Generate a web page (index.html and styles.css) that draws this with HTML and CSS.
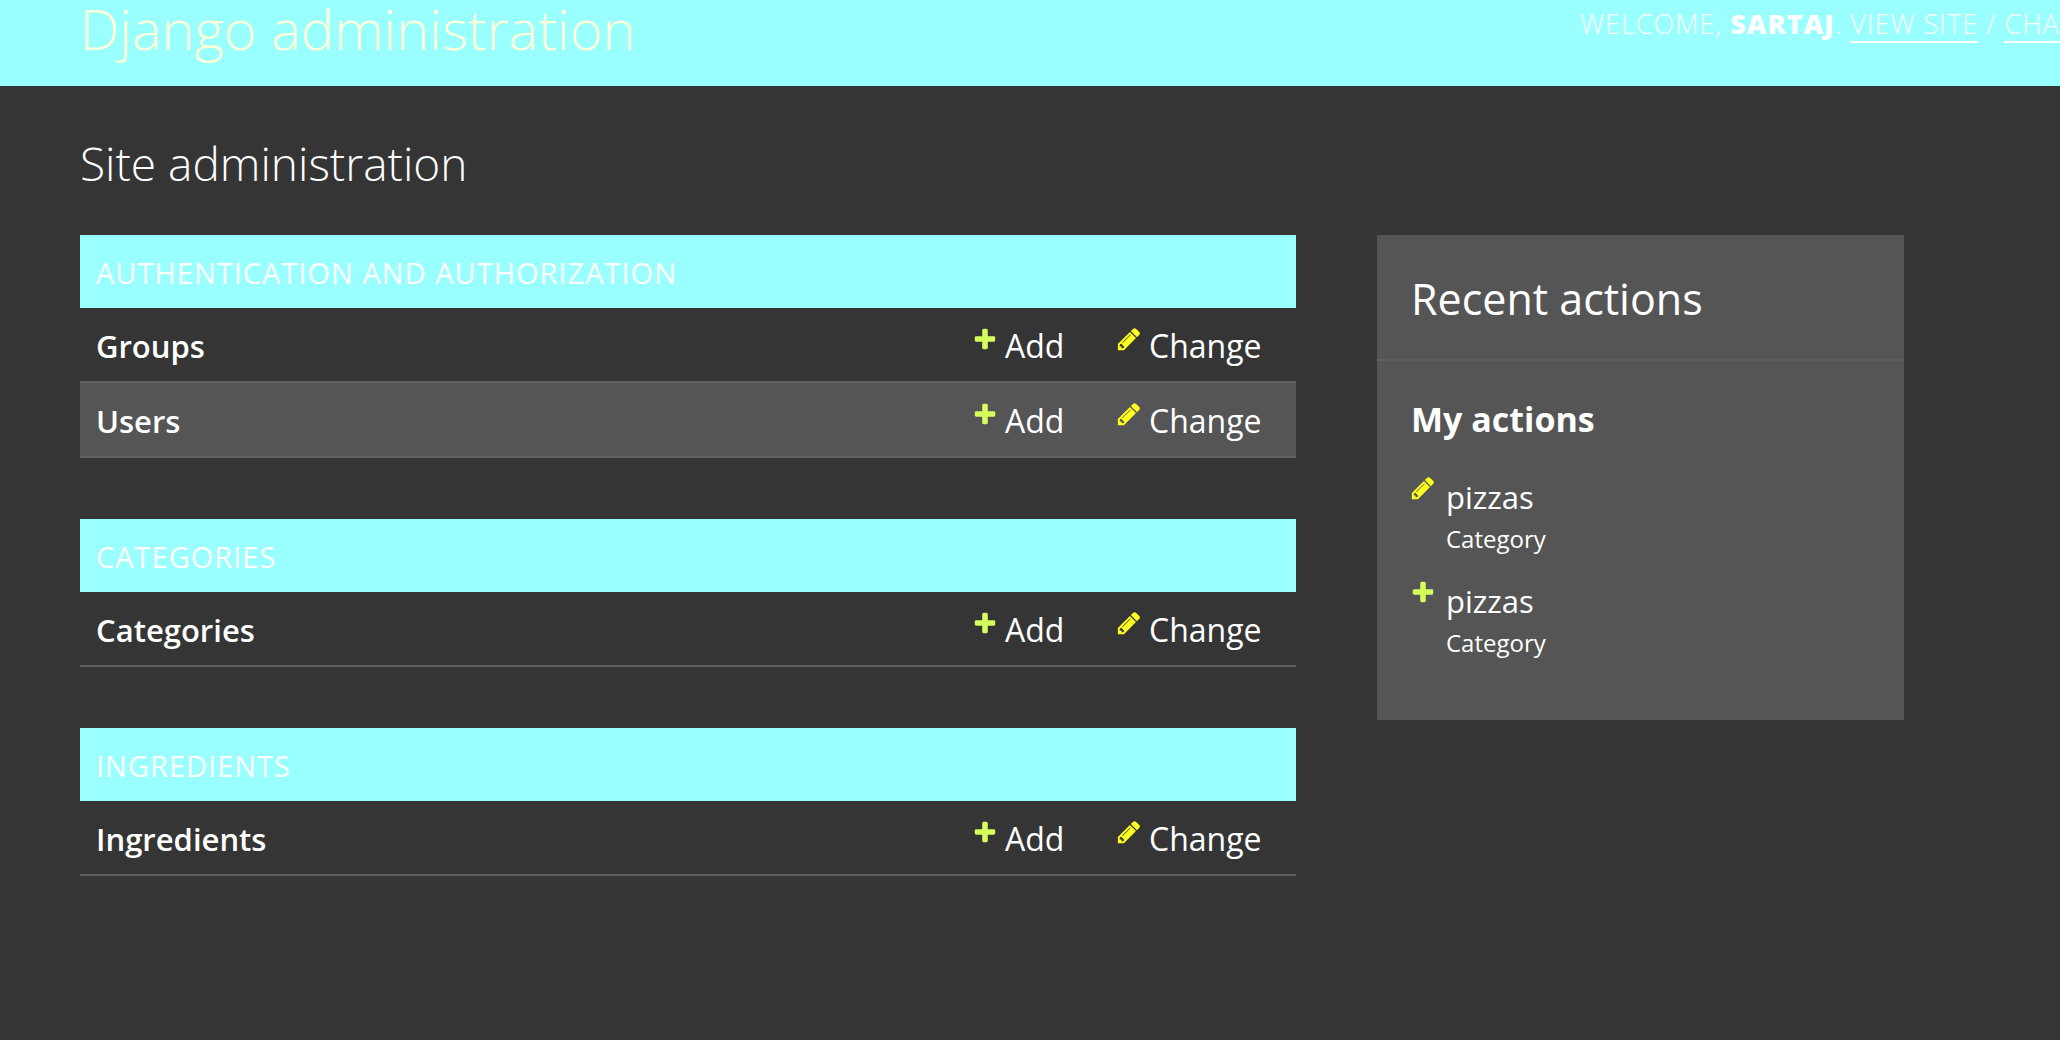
FILE: index.html
```html
<!DOCTYPE html>
<html lang="en">
<head>
<meta charset="utf-8">
<title>Site administration | Django site admin</title>
<link rel="stylesheet" href="styles.css">
</head>
<body>
<svg class="sprite" aria-hidden="true">
  <symbol id="icon-add" viewBox="0 0 1792 1792"><path d="M1600 796v192q0 40-28 68t-68 28h-416v416q0 40-28 68t-68 28h-192q-40 0-68-28t-28-68v-416h-416q-40 0-68-28t-28-68v-192q0-40 28-68t68-28h416v-416q0-40 28-68t68-28h192q40 0 68 28t28 68v416h416q40 0 68 28t28 68z"/></symbol>
  <symbol id="icon-change" viewBox="0 0 1792 1792"><path d="M491 1536l91-91-235-235-91 91v107h128v128h107zm523-928q0-22-22-22-10 0-17 7l-542 542q-7 7-7 17 0 22 22 22 10 0 17-7l542-542q7-7 7-17zm-54-192l416 416-832 832h-416v-416zm683 96q0 53-37 90l-166 166-416-416 166-165q36-38 90-38 53 0 91 38l235 234q37 39 37 91z"/></symbol>
</svg>
<header class="header">
  <h1 class="branding"><a href="#">Django administration</a></h1>
  <div class="user-tools">Welcome, <strong>Sartaj</strong>. <a href="#">View site</a> / <a href="#">Change password</a></div>
</header>
<main class="content">
  <h2 class="page-title">Site administration</h2>
  <div class="columns">
    <div class="modules">
      <table class="module">
        <caption><a href="#">Authentication and Authorization</a></caption>
        <tbody>
          <tr><th scope="row"><a href="#">Groups</a></th><td class="add-cell"><a class="action" href="#"><svg class="icon add"><use href="#icon-add"/></svg>Add</a></td><td class="change-cell"><a class="action" href="#"><svg class="icon change"><use href="#icon-change"/></svg>Change</a></td></tr>
          <tr><th scope="row"><a href="#">Users</a></th><td class="add-cell"><a class="action" href="#"><svg class="icon add"><use href="#icon-add"/></svg>Add</a></td><td class="change-cell"><a class="action" href="#"><svg class="icon change"><use href="#icon-change"/></svg>Change</a></td></tr>
        </tbody>
      </table>
      <table class="module">
        <caption><a href="#">Categories</a></caption>
        <tbody>
          <tr><th scope="row"><a href="#">Categories</a></th><td class="add-cell"><a class="action" href="#"><svg class="icon add"><use href="#icon-add"/></svg>Add</a></td><td class="change-cell"><a class="action" href="#"><svg class="icon change"><use href="#icon-change"/></svg>Change</a></td></tr>
        </tbody>
      </table>
      <table class="module">
        <caption><a href="#">Ingredients</a></caption>
        <tbody>
          <tr><th scope="row"><a href="#">Ingredients</a></th><td class="add-cell"><a class="action" href="#"><svg class="icon add"><use href="#icon-add"/></svg>Add</a></td><td class="change-cell"><a class="action" href="#"><svg class="icon change"><use href="#icon-change"/></svg>Change</a></td></tr>
        </tbody>
      </table>
    </div>
    <aside class="recent">
      <h2 class="recent-title">Recent actions</h2>
      <h3 class="recent-subtitle">My actions</h3>
      <ul class="action-list">
        <li><svg class="icon change"><use href="#icon-change"/></svg><div><a href="#">pizzas</a><span class="kind">Category</span></div></li>
        <li><svg class="icon add"><use href="#icon-add"/></svg><div><a href="#">pizzas</a><span class="kind">Category</span></div></li>
      </ul>
    </aside>
  </div>
</main>
</body>
</html>
```

FILE: styles.css
```css
* { box-sizing: border-box; }

body {
  margin: 0;
  background: #353535;
  color: #fff;
  font-family: "Open Sans", "Noto Sans", sans-serif;
  font-size: 32px;
}

a { color: inherit; text-decoration: none; }
h1, h2, h3, ul { margin: 0; padding: 0; }
.sprite { display: none; }

.header {
  display: flex;
  justify-content: space-between;
  height: 86px;
  padding-left: 80px;
  background: #9ff;
}

.branding {
  color: #ffffdc;
  font-size: 56px;
  font-weight: 300;
  line-height: 56px;
}

.user-tools {
  flex: 0 0 480px;
  overflow: hidden;
  font-size: 27px;
  font-weight: 300;
  line-height: 48px;
  letter-spacing: 1px;
  text-transform: uppercase;
  white-space: nowrap;
}
.user-tools strong { font-weight: 800; }
.user-tools a { display: inline-block; line-height: 34px; border-bottom: 2px solid #fff; }

.content { padding: 45px 156px 40px 80px; }

.page-title {
  margin-bottom: 40px;
  font-size: 46px;
  font-weight: 300;
  line-height: 64px;
}

.columns { display: flex; align-items: flex-start; gap: 81px; }
.modules { flex: 1; display: flex; flex-direction: column; gap: 61px; }

.module { width: 100%; border-collapse: separate; border-spacing: 0; table-layout: fixed; }
.module caption {
  height: 73px;
  padding: 0 16px;
  background: #9ff;
  font-size: 29px;
  line-height: 76px;
  letter-spacing: 1px;
  text-align: left;
  text-transform: uppercase;
}
.module th, .module td {
  height: 75px;
  padding: 2px 0 0;
  border-bottom: 2px solid #606060;
  line-height: 40px;
  text-align: left;
}
.module th { padding-left: 16px; font-size: 31px; font-weight: 600; }
.module tr:nth-child(even) { background: #555; }
.add-cell { width: 144px; }
.change-cell { width: 180px; }

.action { display: flex; align-items: flex-start; gap: 7px; }
.icon { flex: none; width: 26px; height: 26px; }
.icon.add { fill: #d4ff5c; }
.icon.change { fill: #ffff20; }

.recent { flex: 0 0 527px; padding-bottom: 57px; background: #555; }
.recent-title {
  padding: 34px 34px 30px;
  border-bottom: 2px solid #606060;
  font-size: 43px;
  font-weight: 400;
  line-height: 60px;
}
.recent-subtitle { padding: 36px 34px 34px; font-size: 34px; font-weight: 700; line-height: 44px; }
.action-list { display: flex; flex-direction: column; gap: 20px; padding: 0 33px; list-style: none; }
.action-list li { display: flex; gap: 10px; line-height: 44px; }
.action-list a, .kind { display: block; }
.action-list a { font-size: 31px; }
.kind { font-size: 24px; line-height: 40px; }
```
